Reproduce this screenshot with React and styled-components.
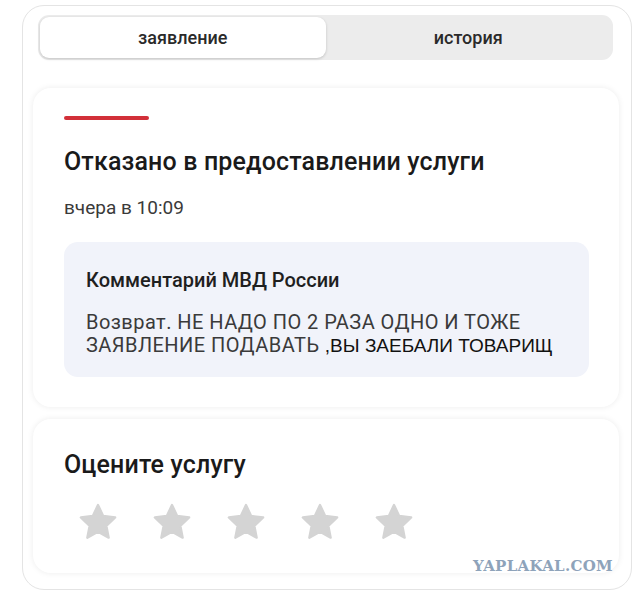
import React from 'react';
import styled, { createGlobalStyle } from 'styled-components';

const GlobalStyle = createGlobalStyle`
  html, body {
    margin: 0;
    padding: 0;
    background: #fff;
  }
  body {
    font-family: Roboto, "Noto Sans", sans-serif;
    color: #1c1c1e;
  }
`;

const Page = styled.div`
  width: 640px;
  height: 597px;
  box-sizing: border-box;
  padding: 5px 8px 7px 22px;
`;

const Shell = styled.div`
  height: 100%;
  box-sizing: border-box;
  border: 1px solid #e4e4e4;
  border-radius: 22px;
  padding: 9px 12px 0 10px;
  display: flex;
  flex-direction: column;
  position: relative;
`;

const Tabs = styled.div`
  margin: 0 6px 0 5px;
  height: 45px;
  box-sizing: border-box;
  padding: 2px;
  background: #ececec;
  border-radius: 11px;
  display: grid;
  grid-template-columns: 1fr 1fr;
`;

const Tab = styled.div`
  display: flex;
  align-items: center;
  justify-content: center;
  font-size: 18px;
  font-weight: 500;
  color: #2a2a2a;
  border-radius: 9px;
  background: ${p => (p.active ? '#fff' : 'transparent')};
  box-shadow: ${p => (p.active ? '0 1px 3px rgba(0,0,0,0.18)' : 'none')};
`;

const Card = styled.div`
  margin-top: ${p => p.gap}px;
  border-radius: 18px;
  background: #fff;
  box-shadow: 0 0 6px rgba(0, 0, 0, 0.08);
  padding: ${p => p.pad};
`;

const RedBar = styled.div`
  width: 85px;
  height: 4px;
  border-radius: 2px;
  background: #d23039;
`;

const Heading = styled.h2`
  margin: ${p => p.mt}px 0 0;
  font-size: 25px;
  line-height: 30px;
  font-weight: 500;
  letter-spacing: 0.15px;
  color: #1a1a1a;
`;

const Time = styled.div`
  margin-top: 20px;
  font-size: 19px;
  line-height: 22px;
  color: #3a3a3a;
`;

const Comment = styled.div`
  margin-top: 23px;
  background: #f1f3fa;
  border-radius: 14px;
  padding: 26px 20px 20px 22px;
`;

const CommentTitle = styled.div`
  font-size: 20px;
  line-height: 24px;
  font-weight: 500;
  color: #1f1f1f;
`;

const CommentText = styled.div`
  margin-top: 19px;
  font-size: 20px;
  line-height: 23px;
  letter-spacing: 0.45px;
  color: #3a3a3a;
`;

const Tail = styled.span`
  font-family: "Liberation Sans", Arial, sans-serif;
  font-size: 19px;
  letter-spacing: 0;
  color: #111;
`;

const Stars = styled.div`
  display: flex;
  gap: 34px;
  margin-top: 22px;
  margin-left: 14px;
`;

const Watermark = styled.div`
  position: absolute;
  right: 18px;
  bottom: 14px;
  font-family: "DejaVu Serif", serif;
  font-weight: 700;
  font-size: 15px;
  letter-spacing: 0.3px;
  color: #8ea3ba;
`;

const Star = () => (
  <svg width="40" height="40" viewBox="0 0 24 24">
    <path
      d="M12 1.8l3.1 6.6 7.2.9-5.3 5 1.4 7.1L12 17.9l-6.4 3.5L7 14.3l-5.3-5 7.2-.9z"
      fill="#d4d4d4"
      stroke="#d4d4d4"
      strokeWidth="1.4"
      strokeLinejoin="round"
    />
  </svg>
);

export default function App() {
  return (
    <>
      <GlobalStyle />
      <Page>
        <Shell>
          <Tabs>
            <Tab active>заявление</Tab>
            <Tab>история</Tab>
          </Tabs>

          <Card gap={28} pad="28px 30px 30px 31px">
            <RedBar />
            <Heading mt={27}>Отказано в предоставлении услуги</Heading>
            <Time>вчера в 10:09</Time>
            <Comment>
              <CommentTitle>Комментарий МВД России</CommentTitle>
              <CommentText>
                Возврат. НЕ НАДО ПО 2 РАЗА ОДНО И ТОЖЕ
                <br />
                ЗАЯВЛЕНИЕ ПОДАВАТЬ <Tail>,ВЫ ЗАЕБАЛИ ТОВАРИЩ</Tail>
              </CommentText>
            </Comment>
          </Card>

          <Card gap={12} pad="31px 30px 31px 31px">
            <Heading mt={0}>Оцените услугу</Heading>
            <Stars>
              {[0, 1, 2, 3, 4].map(i => (
                <Star key={i} />
              ))}
            </Stars>
          </Card>

          <Watermark>YAPLAKAL.COM</Watermark>
        </Shell>
      </Page>
    </>
  );
}
